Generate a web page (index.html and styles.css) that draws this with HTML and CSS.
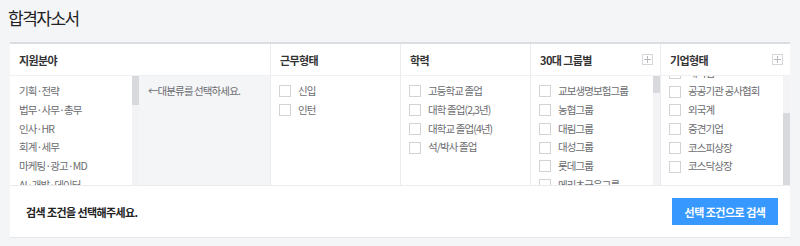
FILE: index.html
```html
<!DOCTYPE html>
<html>
<head>
  <meta charset="utf-8">
  <title>합격자소서</title>
  <link rel="stylesheet" href="styles.css">
</head>
<body>
  <h1 class="page-title">합격자소서</h1>

  <div class="filter-panel">
    <div class="filter-cols">
      <div class="col col-job">
        <div class="col-head">지원분야</div>
        <div class="col-body job-body">
          <div class="scroll-box job-box">
            <ul class="item-list job-list">
              <li>기획·전략</li>
              <li>법무·사무·총무</li>
              <li>인사·HR</li>
              <li>회계·세무</li>
              <li>마케팅·광고·MD</li>
              <li>AI·개발·데이터</li>
              <li>디자인</li>
              <li>물류·무역</li>
              <li>운전·운송·배송</li>
              <li>영업</li>
              <li>고객상담·TM</li>
              <li>금융·보험</li>
              <li>식·음료</li>
              <li>고객서비스·리테일</li>
              <li>엔지니어링·설계</li>
              <li>제조·생산</li>
              <li>교육</li>
              <li>건축·시설</li>
              <li>의료·바이오</li>
              <li>미디어·문화·스포츠</li>
              <li>공공·복지</li>
            </ul>
            <div class="scrollbar"><div class="thumb"></div></div>
          </div>
          <div class="sub-area">←대분류를 선택하세요.</div>
        </div>
      </div>

      <div class="col">
        <div class="col-head">근무형태</div>
        <div class="col-body">
          <ul class="item-list check-list">
            <li><span class="check"></span>신입</li>
            <li><span class="check"></span>인턴</li>
          </ul>
        </div>
      </div>

      <div class="col">
        <div class="col-head">학력</div>
        <div class="col-body">
          <ul class="item-list check-list">
            <li><span class="check"></span>고등학교 졸업</li>
            <li><span class="check"></span>대학 졸업(2,3년)</li>
            <li><span class="check"></span>대학교 졸업(4년)</li>
            <li><span class="check"></span>석/박사 졸업</li>
          </ul>
        </div>
      </div>

      <div class="col">
        <div class="col-head">30대 그룹별 <span class="plus-btn"></span></div>
        <div class="col-body scroll-box">
          <ul class="item-list check-list">
            <li><span class="check"></span>교보생명보험그룹</li>
            <li><span class="check"></span>농협그룹</li>
            <li><span class="check"></span>대림그룹</li>
            <li><span class="check"></span>대성그룹</li>
            <li><span class="check"></span>롯데그룹</li>
            <li><span class="check"></span>메리츠금융그룹</li>
            <li><span class="check"></span>미래에셋그룹</li>
            <li><span class="check"></span>부영그룹</li>
            <li><span class="check"></span>삼성그룹</li>
            <li><span class="check"></span>세아그룹</li>
            <li><span class="check"></span>신세계그룹</li>
            <li><span class="check"></span>씨제이그룹</li>
            <li><span class="check"></span>에스케이그룹</li>
            <li><span class="check"></span>에쓰-오일그룹</li>
            <li><span class="check"></span>엘지그룹</li>
            <li><span class="check"></span>엘에스그룹</li>
            <li><span class="check"></span>영풍그룹</li>
            <li><span class="check"></span>이랜드그룹</li>
            <li><span class="check"></span>지에스그룹</li>
            <li><span class="check"></span>케이티그룹</li>
            <li><span class="check"></span>케이씨씨그룹</li>
            <li><span class="check"></span>태광그룹</li>
            <li><span class="check"></span>포스코그룹</li>
            <li><span class="check"></span>한국투자금융그룹</li>
            <li><span class="check"></span>한진그룹</li>
            <li><span class="check"></span>한화그룹</li>
            <li><span class="check"></span>현대백화점그룹</li>
            <li><span class="check"></span>현대자동차그룹</li>
            <li><span class="check"></span>현대중공업그룹</li>
            <li><span class="check"></span>효성그룹</li>
            <li><span class="check"></span>두산그룹</li>
            <li><span class="check"></span>금호아시아나그룹</li>
            <li><span class="check"></span>하림그룹</li>
            <li><span class="check"></span>셀트리온그룹</li>
            <li><span class="check"></span>카카오그룹</li>
            <li><span class="check"></span>네이버그룹</li>
          </ul>
          <div class="scrollbar"><div class="thumb"></div></div>
        </div>
      </div>

      <div class="col col-last">
        <div class="col-head">기업형태 <span class="plus-btn"></span></div>
        <div class="col-body scroll-box at-end">
          <ul class="item-list check-list">
            <li><span class="check"></span>1000대기업</li>
            <li><span class="check"></span>공기업</li>
            <li><span class="check"></span>대기업</li>
            <li><span class="check"></span>공공기관 공사협회</li>
            <li><span class="check"></span>외국계</li>
            <li><span class="check"></span>중견기업</li>
            <li><span class="check"></span>코스피상장</li>
            <li><span class="check"></span>코스닥상장</li>
          </ul>
          <div class="scrollbar"><div class="thumb"></div></div>
        </div>
      </div>
    </div>

    <div class="filter-footer">
      <div class="footer-msg">검색 조건을 선택해주세요.</div>
      <button class="search-btn">선택 조건으로 검색</button>
    </div>
  </div>

  <script src="app.js"></script>
</body>
</html>
```

FILE: styles.css
```css
body {
  font-family: "Noto Sans CJK KR", sans-serif;
  margin: 0;
  background: #f4f5f7;
  color: #333;
}

.page-title {
  margin: 0;
  height: 42px;
  line-height: 36px;
  padding-left: 8px;
  font-size: 17px;
  font-weight: 400;
  letter-spacing: -1.5px;
  color: #222;
}

.filter-panel {
  margin: 0 10px;
  background: white;
  border-top: 2px solid #dcdde0;
  border-bottom: 1px solid #e6e7ea;
}

.filter-cols {
  display: flex;
  border-bottom: 1px solid #ececee;
}

.col {
  width: 130px;
  border-left: 1px solid #ececee;
  box-sizing: border-box;
}

.col-job {
  width: 260px;
  border-left: none;
}

.col-head {
  height: 31px;
  border-bottom: 1px solid #f0f0f2;
  padding: 0 7px 0 9px;
  display: flex;
  align-items: center;
  justify-content: space-between;
  font-size: 11px;
  font-weight: 700;
  letter-spacing: -0.6px;
  color: #333;
}

.plus-btn {
  width: 11px;
  height: 11px;
  border: 1px solid #d6d7da;
  box-sizing: border-box;
  background:
    linear-gradient(#b9babd, #b9babd) center / 7px 1px no-repeat,
    linear-gradient(#b9babd, #b9babd) center / 1px 7px no-repeat;
}

.col-body {
  height: 109px;
}

.job-body {
  display: flex;
}

/* 헤드리스에서는 스크롤바가 안 보여서 직접 그린다 */
.scroll-box {
  display: flex;
  height: 109px;
}

.scroll-box .item-list {
  flex: 1;
  overflow: hidden;
}

.scrollbar {
  width: 7px;
  flex-shrink: 0;
  background: #f3f3f5;
}

.thumb {
  background: #d8d9dc;
}

.item-list {
  list-style: none;
  margin: 0;
  padding: 6px 0 9px;
  height: 109px;
  box-sizing: border-box;
  font-size: 10.5px;
  letter-spacing: -0.9px;
  color: #6b6c70;
}

.item-list li {
  height: 18.75px;
  line-height: 18.75px;
  white-space: nowrap;
  display: flex;
  align-items: center;
}

.job-box {
  width: 129px;
}

.job-list {
  padding-left: 9px;
}

.check-list {
  padding-left: 8px;
}

.check {
  width: 12px;
  height: 12px;
  border: 1px solid #d2d3d6;
  box-sizing: border-box;
  background: white;
  margin-right: 7px;
  flex-shrink: 0;
}

.sub-area {
  flex: 1;
  background: #f4f5f7;
  padding: 6px 9px;
  font-size: 10.5px;
  line-height: 18.75px;
  letter-spacing: -0.9px;
  color: #6b6c70;
}

.filter-footer {
  height: 51px;
  padding: 0 12px 0 16px;
  display: flex;
  align-items: center;
  justify-content: space-between;
}

.footer-msg {
  font-size: 11px;
  font-weight: 700;
  letter-spacing: -0.6px;
  color: #222;
}

.search-btn {
  width: 106px;
  height: 27px;
  border: none;
  background: #3799ff;
  color: white;
  font-family: inherit;
  font-size: 11px;
  font-weight: 700;
  letter-spacing: -0.5px;
  cursor: pointer;
}
```

FILE: app.js
```js
// 스크롤 목록마다 썸 크기와 위치를 계산한다
document.querySelectorAll('.scroll-box').forEach(function (box) {
  var list = box.querySelector('.item-list');
  var thumb = box.querySelector('.thumb');

  // 기업형태는 맨 아래까지 내려간 상태
  if (box.classList.contains('at-end')) {
    list.scrollTop = list.scrollHeight;
  }

  var ratio = list.clientHeight / list.scrollHeight;
  thumb.style.height = Math.round(list.clientHeight * ratio) + 'px';
  thumb.style.marginTop = Math.round(list.scrollTop * ratio) + 'px';
});
```
